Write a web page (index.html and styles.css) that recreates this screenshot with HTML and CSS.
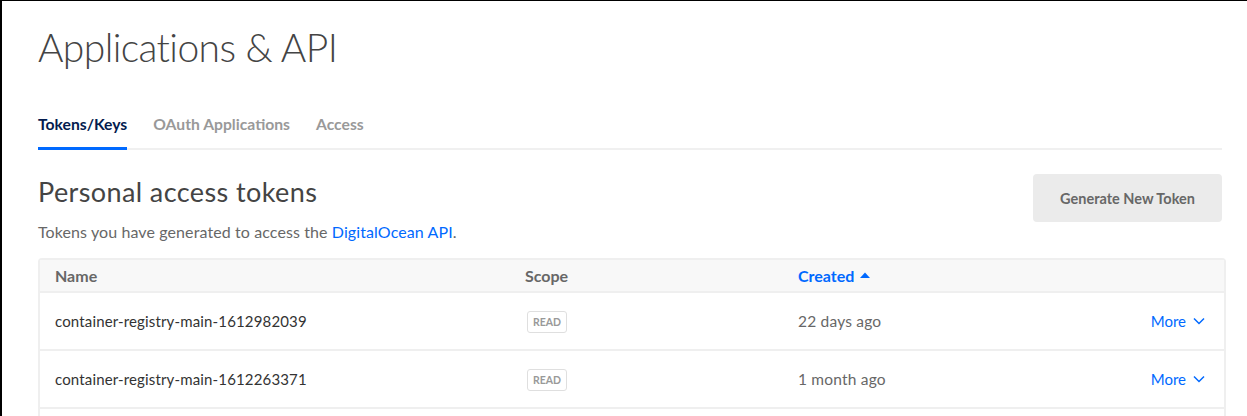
FILE: index.html
```html
<!DOCTYPE html>
<html>
<head>
<meta charset="utf-8">
<link rel="stylesheet" href="styles.css">
</head>
<body>
<div class="page">
  <h1 class="title">Applications &amp; API</h1>
  <nav class="tabs">
    <a class="tab active">Tokens/Keys</a>
    <a class="tab">OAuth Applications</a>
    <a class="tab">Access</a>
  </nav>
  <section class="section">
    <div class="section-head">
      <div>
        <h2 class="section-title">Personal access tokens</h2>
        <p class="section-desc">Tokens you have generated to access the <a class="link">DigitalOcean API</a>.</p>
      </div>
      <button class="btn">Generate New Token</button>
    </div>
    <div class="table">
      <div class="row head">
        <div class="cell">Name</div>
        <div class="cell">Scope</div>
        <div class="cell sorted">Created <svg class="caret" width="10" height="6" viewBox="0 0 10 6"><path d="M0 6 L5 0.5 L10 6 Z" fill="#0069ff"/></svg></div>
        <div class="cell"></div>
      </div>
      <div class="row">
        <div class="cell name">container-registry-main-1612982039</div>
        <div class="cell"><span class="badge">READ</span></div>
        <div class="cell date">22 days ago</div>
        <div class="cell more">More <svg class="chev" width="12" height="8" viewBox="0 0 12 8"><path d="M1 1.5 L6 6.5 L11 1.5" fill="none" stroke="#0069ff" stroke-width="1.5"/></svg></div>
      </div>
      <div class="row">
        <div class="cell name">container-registry-main-1612263371</div>
        <div class="cell"><span class="badge">READ</span></div>
        <div class="cell date">1 month ago</div>
        <div class="cell more">More <svg class="chev" width="12" height="8" viewBox="0 0 12 8"><path d="M1 1.5 L6 6.5 L11 1.5" fill="none" stroke="#0069ff" stroke-width="1.5"/></svg></div>
      </div>
      <div class="row">
        <div class="cell name">&nbsp;</div>
        <div class="cell"></div>
        <div class="cell"></div>
        <div class="cell"></div>
      </div>
    </div>
  </section>
</div>
</body>
</html>
```

FILE: styles.css
```css
html, body {
  margin: 0;
  padding: 0;
  background: #fff;
  overflow: hidden;
}
body {
  border-left: 2px solid #000;
  border-top: 1px solid #000;
  height: 415px;
  font-family: Lato, "Liberation Sans", sans-serif;
  color: #333;
}
.page {
  padding: 0 25px 0 36px;
}
.title {
  margin: 0;
  padding-top: 20px;
  font-size: 39px;
  font-weight: 300;
  letter-spacing: -0.6px;
  line-height: 52px;
  color: #444;
}
.tabs {
  display: flex;
  gap: 26px;
  margin-top: 41px;
  border-bottom: 2px solid #f0f0f0;
}
.tab {
  font-size: 15.7px;
  font-weight: 700;
  color: #999;
  line-height: 20px;
  padding-bottom: 13px;
  margin-bottom: -2px;
  border-bottom: 3px solid transparent;
}
.tab.active {
  color: #031b4e;
  border-bottom-color: #0069ff;
}
.section-head {
  display: flex;
  justify-content: space-between;
  align-items: flex-start;
  margin-top: 24px;
}
.section-title {
  margin: 0;
  font-size: 27px;
  font-weight: 400;
  letter-spacing: 0.4px;
  line-height: 36px;
  color: #444;
}
.section-desc {
  margin: 12px 0 0;
  font-size: 16px;
  letter-spacing: 0.1px;
  line-height: 20px;
  color: #676767;
}
.link {
  color: #0069ff;
}
.btn {
  margin-top: 0;
  width: 189px;
  height: 48px;
  border: none;
  border-radius: 4px;
  background: #ebebeb;
  font-family: inherit;
  font-size: 14.5px;
  font-weight: 700;
  color: #676767;
}
.table {
  margin-top: 16px;
  margin-right: -4px;
  border: 2px solid #efefef;
  border-bottom: none;
  border-radius: 4px 4px 0 0;
}
.row {
  display: grid;
  grid-template-columns: 470px 273px 1fr auto;
  align-items: center;
  padding: 0 19px 0 15px;
  height: 56px;
  border-bottom: 2px solid #efefef;
}
.row.head {
  height: 31px;
  background: #f8f8f8;
  font-size: 16px;
  font-weight: 700;
  color: #676767;
}
.sorted {
  color: #0069ff;
  display: flex;
  align-items: center;
  gap: 6px;
}
.caret {
  margin-top: -2px;
}
.name {
  font-size: 15px;
  letter-spacing: 0.15px;
  color: #333;
}
.badge {
  display: inline-block;
  margin-left: 2px;
  padding: 0 5px;
  height: 20px;
  line-height: 20px;
  border: 1px solid #dfdfdf;
  border-radius: 3px;
  font-size: 10.5px;
  font-weight: 700;
  color: #999;
}
.date {
  font-size: 15.5px;
  letter-spacing: 0.2px;
  color: #676767;
}
.more {
  display: flex;
  align-items: center;
  gap: 7px;
  font-size: 15px;
  color: #0069ff;
}
```
